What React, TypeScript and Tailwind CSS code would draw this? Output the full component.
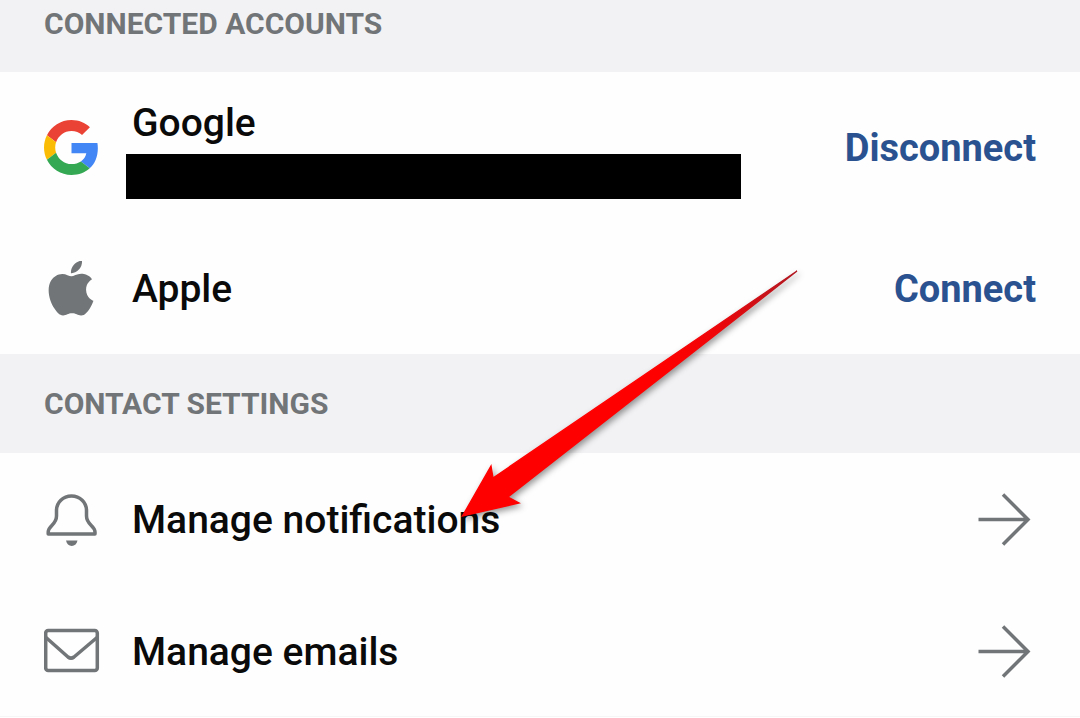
import type { ReactNode } from "react";

function GoogleIcon() {
  return (
    <svg viewBox="0 0 48 48" className="mr-px size-[55px]" aria-hidden="true">
      <path fill="#EA4335" d="M24 9.5c3.54 0 6.71 1.22 9.21 3.6l6.85-6.85C35.9 2.38 30.47 0 24 0 14.62 0 6.51 5.38 2.56 13.22l7.98 6.19C12.43 13.72 17.74 9.5 24 9.5z" />
      <path fill="#4285F4" d="M46.98 24.55c0-1.57-.15-3.09-.38-4.55H24v9.02h12.94c-.58 2.96-2.26 5.48-4.78 7.18l7.73 6c4.51-4.18 7.09-10.36 7.09-17.65z" />
      <path fill="#FBBC05" d="M10.53 28.59c-.48-1.45-.76-2.99-.76-4.59s.27-3.14.76-4.59l-7.98-6.19C.92 16.46 0 20.12 0 24c0 3.88.92 7.54 2.56 10.78l7.97-6.19z" />
      <path fill="#34A853" d="M24 48c6.48 0 11.93-2.13 15.89-5.81l-7.73-6c-2.15 1.45-4.92 2.3-8.16 2.3-6.26 0-11.57-4.22-13.47-9.91l-7.98 6.19C6.51 42.62 14.62 48 24 48z" />
    </svg>
  );
}

function AppleIcon() {
  return (
    <svg viewBox="0.2 0.2 24 24" className="mr-px size-[55px]" fill="#727577" aria-hidden="true">
      <path d="M12.152 6.896c-.948 0-2.415-1.078-3.96-1.04-2.04.027-3.91 1.183-4.961 3.014-2.117 3.675-.546 9.103 1.519 12.09 1.013 1.454 2.208 3.09 3.792 3.039 1.52-.065 2.09-.987 3.935-.987 1.831 0 2.35.987 3.96.948 1.637-.026 2.676-1.48 3.676-2.948 1.156-1.688 1.636-3.325 1.662-3.415-.039-.013-3.182-1.221-3.22-4.857-.026-3.04 2.48-4.494 2.597-4.559-1.429-2.09-3.623-2.324-4.39-2.376-2-.156-3.675 1.09-4.61 1.09zM15.53 3.83c.843-1.012 1.4-2.427 1.245-3.83-1.207.052-2.662.805-3.532 1.818-.78.896-1.454 2.338-1.273 3.714 1.338.104 2.715-.688 3.559-1.701" />
    </svg>
  );
}

function BellIcon() {
  return (
    <svg viewBox="0 0 56 56" className="size-14" fill="none" stroke="#727577" strokeWidth="3.5" strokeLinejoin="round" aria-hidden="true">
      <path d="M27.500 4C19 4 12.500 10.500 12.500 18.500V24c0 9-8.300 9.500-8.300 16v2H51v-2c0-6.500-8.500-7-8.500-16v-5.500C42.500 10.500 36 4 27.500 4z" />
      <path d="M22 48.500h11.500c-.6 3.400-2.800 5.500-5.750 5.500S22.600 51.900 22 48.500z" fill="#727577" stroke="none" />
    </svg>
  );
}

function MailIcon() {
  return (
    <svg viewBox="0 0 56 56" className="size-14" fill="none" stroke="#727577" strokeWidth="3.5" strokeLinejoin="round" aria-hidden="true">
      <rect x="1.700" y="6.500" width="51.600" height="40" rx="2.500" />
      <path d="M2 13.500 24 33q3 2.300 6 0L53 13.500" />
    </svg>
  );
}

function ArrowIcon() {
  return (
    <svg viewBox="0 0 56 56" className="size-14 overflow-visible" fill="none" stroke="#727577" strokeWidth="3.5" aria-hidden="true">
      <path d="M-1.500 27.500h50M23 2.500l25 25-25 25" />
    </svg>
  );
}

function PointerArrow() {
  return (
    <svg
      viewBox="0 0 360 270"
      className="pointer-events-none absolute top-[260px] left-[450px] h-[270px] w-[360px] overflow-visible drop-shadow-[2px_3px_3px_rgba(0,0,0,0.4)]"
      aria-hidden="true"
    >
      <defs>
        <linearGradient id="shaft" x1="1" y1="0" x2="0" y2="1">
          <stop offset="0" stopColor="#b01822" />
          <stop offset="0.250" stopColor="#f00508" />
          <stop offset="0.400" stopColor="#ff0000" />
        </linearGradient>
      </defs>
      <path fill="url(#shaft)" stroke="url(#shaft)" strokeWidth="1.400" d="M347 11 43 218 41 206 12.500 256 69 243 58 237Z" />
    </svg>
  );
}

function SectionTitle({ children }: { children: ReactNode }) {
  return <h2 className="text-[30px] leading-10 font-bold text-[#727577]">{children}</h2>;
}

const rowText = "text-[39px] leading-12 font-medium text-[#0a0a0a]";
const linkText = "text-[38px] leading-12 font-bold text-[#2b5290]";

export default function App() {
  return (
    <main className="relative w-full overflow-hidden bg-[#fefefe] font-[Roboto,sans-serif]">
      <header className="bg-[#f2f2f4] px-11 pt-1 pb-7">
        <SectionTitle>CONNECTED ACCOUNTS</SectionTitle>
      </header>
      <ul>
        <li className="flex items-center gap-8 px-11 pt-[27px] pb-[33px]">
          <GoogleIcon />
          <div className="flex-1">
            <p className={rowText}>Google</p>
            <div className="mt-[7px] -mb-[3px] -ml-[6px] h-[45px] max-w-[615px] bg-black" />
          </div>
          <button type="button" className={linkText}>Disconnect</button>
        </li>
        <li className="flex items-center gap-8 px-11 pt-8 pb-[38px]">
          <AppleIcon />
          <p className={rowText + " flex-1"}>Apple</p>
          <button type="button" className={linkText}>Connect</button>
        </li>
      </ul>
      <header className="bg-[#f2f2f4] px-11 pt-[30px] pb-[29px]">
        <SectionTitle>CONTACT SETTINGS</SectionTitle>
      </header>
      <nav>
        <a href="#notifications" className="flex items-center gap-8 px-11 pt-[39px] pb-[37px]">
          <BellIcon />
          <span className={rowText + " flex-1"}>Manage notifications</span>
          <ArrowIcon />
        </a>
        <a href="#emails" className="flex items-center gap-8 border-b border-[#f6f6f6] px-11 pt-[39px] pb-9">
          <MailIcon />
          <span className={rowText + " flex-1"}>Manage emails</span>
          <ArrowIcon />
        </a>
      </nav>
      <PointerArrow />
    </main>
  );
}
